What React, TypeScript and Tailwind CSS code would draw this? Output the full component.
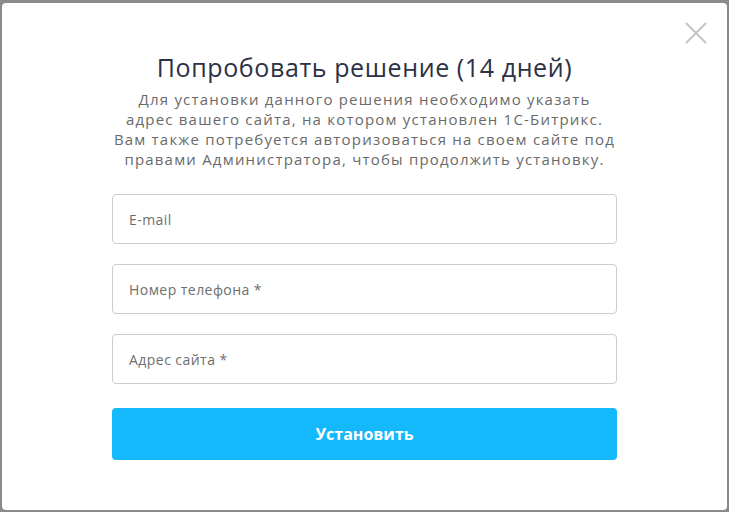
import React from 'react';

const fields = ['E-mail', 'Номер телефона *', 'Адрес сайта *'];

export default function App() {
  return (
    <div
      className="h-[512px] w-full bg-[#8b8b8b] pt-[3px] pl-[2px] pr-[2px] pb-[2px] flex"
      style={{ fontFamily: '"Open Sans", "Noto Sans", sans-serif' }}
    >
      {/* Modal */}
      <div className="relative flex-1 bg-white rounded-[4px] flex flex-col items-center">
        <button className="absolute right-[20px] top-[19px] w-[22px] h-[22px] text-[#c4c4c4]">
          <svg viewBox="0 0 22 22" width="22" height="22" fill="none" stroke="currentColor" strokeWidth="2">
            <path d="M1 1 L21 21 M21 1 L1 21" />
          </svg>
        </button>

        <h2 className="mt-[48px] text-[25px] leading-[32px] text-[#2c3145] tracking-[0.6px]">
          Попробовать решение (14 дней)
        </h2>
        <p className="mt-[6px] w-[600px] text-center text-[15px] leading-[20px] text-[#6a6a6a] tracking-[1.2px]">
          Для установки данного решения необходимо указать
          <br />
          адрес вашего сайта, на котором установлен 1С-Битрикс.
          <br />
          Вам также потребуется авторизоваться на своем сайте под
          <br />
          правами Администратора, чтобы продолжить установку.
        </p>

        <form className="mt-[25px] w-[505px] flex flex-col gap-[20px]">
          {fields.map((f) => (
            <div
              key={f}
              className="h-[50px] border border-[#cccccc] rounded-[4px] px-[16px] flex items-center text-[14px] text-[#6e6e6e] tracking-[0.45px]"
            >
              {f}
            </div>
          ))}
          <button
            type="button"
            className="mt-[4px] h-[52px] rounded-[4px] bg-[#13b9fb] text-white font-bold text-[16px]"
          >
            Установить
          </button>
        </form>
      </div>
    </div>
  );
}
